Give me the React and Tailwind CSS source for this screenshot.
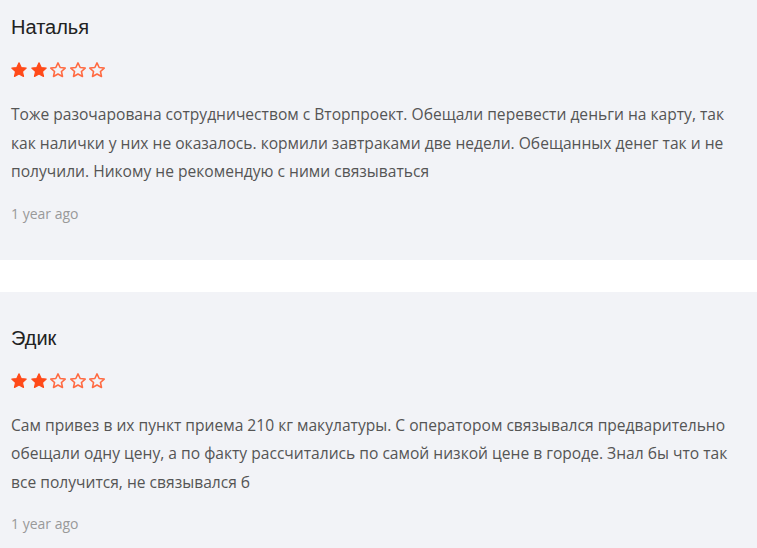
import React from "react";

const STAR = "M12 2.5l2.9 6.2 6.7.7-5 4.6 1.4 6.6L12 17.3l-6 3.3 1.4-6.6-5-4.6 6.7-.7z";

function Stars({ n }) {
  return (
    <div className="flex gap-[1.5px] mt-[20px] ml-[-1px]">
      {[0, 1, 2, 3, 4].map((i) => (
        <svg key={i} width="18" height="18" viewBox="0 0 24 24">
          {i < n ? (
            <path d={STAR} fill="#ff4a1a" stroke="#ff4a1a" strokeWidth="1.6" strokeLinejoin="round" />
          ) : (
            <path d={STAR} fill="none" stroke="#ff6a42" strokeWidth="2.1" strokeLinejoin="round" />
          )}
        </svg>
      ))}
    </div>
  );
}

function Review({ name, text, first }) {
  return (
    <div className={`bg-[#f2f3f7] pl-[11px] pr-[11px] pt-[32px] pb-[36px] ${first ? "mt-[-19px]" : ""}`}>
      <div className="text-[20px] leading-[28px] text-[#222]" style={{ fontFamily: '"Liberation Sans", Arial, sans-serif' }}>
        {name}
      </div>
      <Stars n={2} />
      <p className="mt-[21px] text-[15.6px] leading-[28.5px] text-[#555]" style={{ fontFamily: '"Open Sans", sans-serif' }}>
        {text}
      </p>
      <div className="mt-[18px] text-[14px] leading-[20px] text-[#999]" style={{ fontFamily: '"Open Sans", sans-serif' }}>
        1 year ago
      </div>
    </div>
  );
}

export default function App() {
  return (
    <div className="w-[757px] h-[548px] overflow-hidden bg-white">
      <Review
        first
        name="Наталья"
        text="Тоже разочарована сотрудничеством с Вторпроект. Обещали перевести деньги на карту, так как налички у них не оказалось. кормили завтраками две недели. Обещанных денег так и не получили. Никому не рекомендую с ними связываться"
      />
      <div className="h-[32px]" />
      <Review
        name="Эдик"
        text="Сам привез в их пункт приема 210 кг макулатуры. С оператором связывался предварительно обещали одну цену, а по факту рассчитались по самой низкой цене в городе. Знал бы что так все получится, не связывался б"
      />
    </div>
  );
}
